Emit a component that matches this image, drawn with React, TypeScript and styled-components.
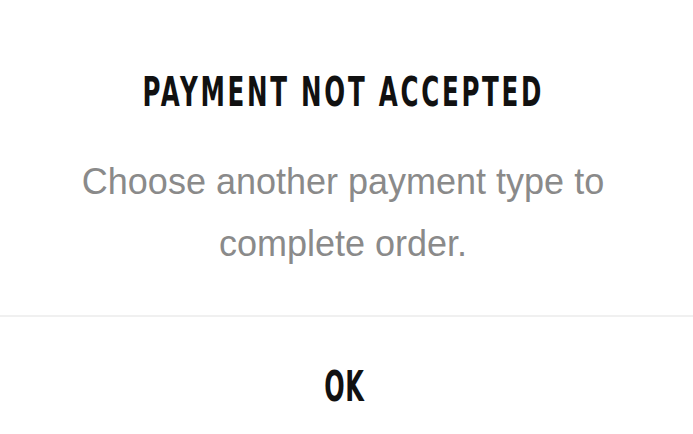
import React from 'react';
import styled, { createGlobalStyle } from 'styled-components';

const GlobalStyle = createGlobalStyle`
	html, body {
		margin: 0;
		padding: 0;
		background: #ffffff;
	}
`;

const Dialog = styled.div`
	width: 693px;
	height: 434px;
	display: flex;
	flex-direction: column;
	background: #ffffff;
	overflow: hidden;
`;

const Content = styled.div`
	display: flex;
	flex-direction: column;
	align-items: center;
	padding: 72px 7px 0 0;
`;

const Title = styled.h1`
	margin: 0;
	font-family: 'DejaVu Sans Condensed', 'Liberation Sans', sans-serif;
	font-weight: 700;
	font-size: 40px;
	line-height: 40px;
	letter-spacing: 4px;
	color: #111111;
	text-transform: uppercase;
	white-space: nowrap;
	transform: scaleX(0.682);
`;

const Message = styled.p`
	margin: 39px 0 0;
	font-family: 'Liberation Sans', Arial, sans-serif;
	font-size: 36px;
	line-height: 62px;
	color: #8a8a8a;
	text-align: center;
	width: 600px;
`;

const Divider = styled.hr`
	margin: 40px 0 0;
	border: none;
	height: 2px;
	background: #f0f0f0;
	width: 100%;
`;

const Footer = styled.div`
	flex: 1;
	display: flex;
	justify-content: center;
	align-items: flex-start;
	padding: 48px 4px 0 0;
`;

const Action = styled.button`
	margin: 0;
	padding: 0;
	border: none;
	background: transparent;
	font-family: 'DejaVu Sans Condensed', 'Liberation Sans', sans-serif;
	font-weight: 700;
	font-size: 43px;
	line-height: 43px;
	letter-spacing: 1px;
	color: #111111;
	transform: scaleX(0.62);
	cursor: pointer;
`;

const App = (): JSX.Element => {
	return (
		<>
			<GlobalStyle />
			<Dialog>
				<Content>
					<Title>Payment Not Accepted</Title>
					<Message>Choose another payment type to complete order.</Message>
				</Content>
				<Divider />
				<Footer>
					<Action>OK</Action>
				</Footer>
			</Dialog>
		</>
	);
};

export default App;
